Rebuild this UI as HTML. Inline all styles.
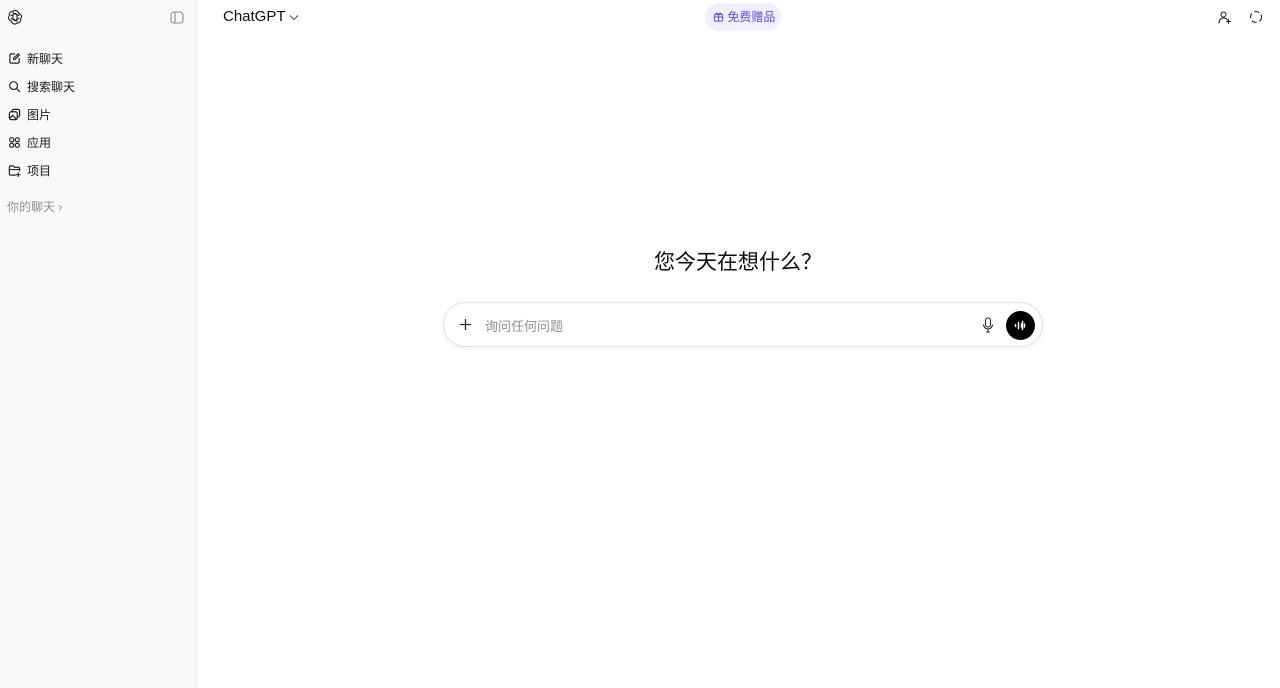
<!DOCTYPE html>
<html><head><meta charset="utf-8"><style>
*{margin:0;padding:0;box-sizing:border-box}
body{width:1280px;height:688px;overflow:hidden;background:#fff;font-family:"Liberation Sans","Noto Sans CJK SC",sans-serif;color:#0d0d0d;position:relative}
.side{position:absolute;left:0;top:0;width:197px;height:688px;background:#f9f9f9;border-right:1px solid #ececec}
.item{position:absolute;left:8px;font-size:12px;display:flex;align-items:center;gap:6px;height:20px;color:#1a1a1a}
.item svg{width:13px;height:13px}
</style></head><body>
<div class="side">
 <svg style="position:absolute;left:7px;top:9px" width="16" height="16" viewBox="0 0 24 24" fill="none" stroke="#222" stroke-width="1.6" stroke-linecap="round" stroke-linejoin="round"><path d="M9 3.5a5 5 0 0 1 8.5 3.2 5 5 0 0 1 2.9 8.3 5 5 0 0 1-5.4 6.1 5 5 0 0 1-8.5-3.2 5 5 0 0 1-2.9-8.3A5 5 0 0 1 9 3.5z"/><path d="M9 8v7l6 3.5M15 16V9L9 5.5M6 10l6-3.5 6 3.5M18 14l-6 3.5L6 14"/></svg>
 <svg style="position:absolute;left:170px;top:11px" width="14" height="13" viewBox="0 0 14 13" fill="none" stroke="#888" stroke-width="1.1"><rect x="1" y="1" width="12" height="11" rx="3"/><path d="M5 1v11"/></svg>
 <div class="item" style="top:48px"><svg viewBox="0 0 14 14" fill="none" stroke="#222" stroke-width="1.3" stroke-linecap="round" stroke-linejoin="round"><path d="M7 2H3.5A1.5 1.5 0 0 0 2 3.5v7A1.5 1.5 0 0 0 3.5 12h7a1.5 1.5 0 0 0 1.5-1.5V7"/><path d="M11 2l1.2 1.2L7.5 8H6V6.5z"/></svg>新聊天</div>
 <div class="item" style="top:76px"><svg viewBox="0 0 14 14" fill="none" stroke="#222" stroke-width="1.3" stroke-linecap="round"><circle cx="6" cy="6" r="4.2"/><path d="M9.2 9.2L12.5 12.5"/></svg>搜索聊天</div>
 <div class="item" style="top:104px"><svg viewBox="0 0 14 14" fill="none" stroke="#222" stroke-width="1.3" stroke-linecap="round" stroke-linejoin="round"><rect x="1.5" y="4" width="8.5" height="8.5" rx="2"/><path d="M4.5 4V3a1.5 1.5 0 0 1 1.5-1.5h5A1.5 1.5 0 0 1 12.5 3v5a1.5 1.5 0 0 1-1.5 1.5h-1"/><path d="M2 11l3-3 4 4"/></svg>图片</div>
 <div class="item" style="top:132px"><svg viewBox="0 0 14 14" fill="none" stroke="#222" stroke-width="1.3"><circle cx="4" cy="4" r="2.2"/><circle cx="10" cy="4" r="2.2"/><circle cx="4" cy="10" r="2.2"/><circle cx="10" cy="10" r="2.2"/></svg>应用</div>
 <div class="item" style="top:160px"><svg viewBox="0 0 14 14" fill="none" stroke="#222" stroke-width="1.3" stroke-linecap="round" stroke-linejoin="round"><path d="M8 12H3a1.5 1.5 0 0 1-1.5-1.5v-7A1.5 1.5 0 0 1 3 2h2.5l1.5 1.5h4A1.5 1.5 0 0 1 12.5 5v2"/><path d="M1.5 6h11M11 9.5v4M9 11.5h4"/></svg>项目</div>
 <div style="position:absolute;left:7px;top:198px;font-size:12px;color:#8f8f8f">你的聊天 ›</div>
</div>
<div style="position:absolute;left:223px;top:8px;font-size:15px;color:#0d0d0d">ChatGPT <svg width="10" height="7" viewBox="0 0 10 7" fill="none" stroke="#555" stroke-width="1.1"><path d="M1 1.5l4 4 4-4"/></svg></div>
<div style="position:absolute;left:705px;top:3px;width:76px;height:28px;border-radius:14px;background:#f0effd;color:#5c53d6;font-size:12px;line-height:28px;padding-left:8px"><svg width="11" height="11" viewBox="0 0 12 12" fill="none" stroke="#5c53d6" stroke-width="1.1" style="vertical-align:-1px"><rect x="1.5" y="4" width="9" height="7" rx="1"/><path d="M1.5 6.5h9M6 4v7M6 4C4 1 2.5 2.5 3.5 4M6 4c2-3 3.5-1.5 2.5 0"/></svg> 免费赠品</div>
<svg style="position:absolute;left:1217px;top:10px" width="15" height="15" viewBox="0 0 15 15" fill="none" stroke="#222" stroke-width="1.1" stroke-linecap="round"><circle cx="6.5" cy="4.5" r="2.5"/><path d="M2 13c0-3 2-5 4.5-5s3 .7 3.8 1.8M11.5 9.5v4M9.5 11.5h4"/></svg>
<svg style="position:absolute;left:1249px;top:10px" width="14" height="14" viewBox="0 0 14 14" fill="none" stroke="#222" stroke-width="1.1" stroke-dasharray="5 3"><circle cx="7" cy="7" r="5.5"/></svg>
<div style="position:absolute;left:0;width:1476px;top:246px;text-align:center;font-size:21px;color:#0d0d0d">您今天在想什么？</div>
<div style="position:absolute;left:443px;top:302px;width:600px;height:45px;border:1px solid #e3e3e3;border-radius:23px;box-shadow:0 2px 5px rgba(0,0,0,.06)">
 <svg style="position:absolute;left:15px;top:15px" width="13" height="13" viewBox="0 0 13 13" fill="none" stroke="#222" stroke-width="1.3"><path d="M6.5 1v11M1 6.5h11"/></svg>
 <div style="position:absolute;left:41px;top:13px;font-size:13px;color:#8f8f8f">询问任何问题</div>
 <svg style="position:absolute;left:538px;top:14px" width="12" height="16" viewBox="0 0 12 16" fill="none" stroke="#222" stroke-width="1.1"><rect x="3.5" y="1" width="5" height="9" rx="2.5"/><path d="M1.5 7.5a4.5 4.5 0 0 0 9 0M6 12v3M4 15h4"/></svg>
 <div style="position:absolute;left:562px;top:8px;width:29px;height:29px;border-radius:50%;background:#000"><svg width="29" height="29" viewBox="0 0 29 29" fill="none" stroke="#fff" stroke-width="1.5" stroke-linecap="round"><path d="M9.5 13.5v2M12.5 11.5v6M15.5 13v3M18.5 13v3M16.5 10.5v8"/></svg></div>
</div>
</body></html>
